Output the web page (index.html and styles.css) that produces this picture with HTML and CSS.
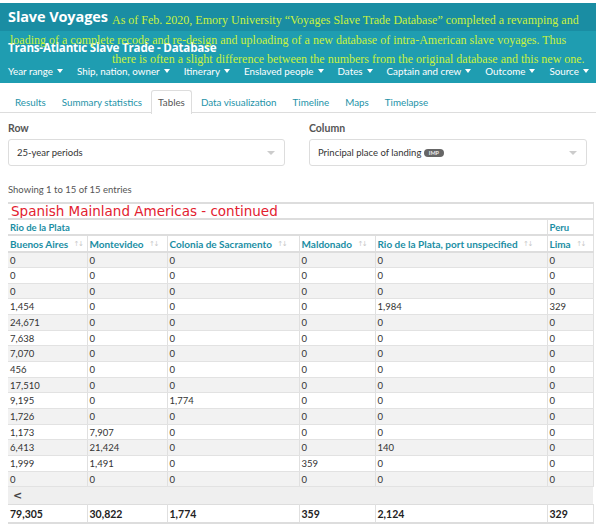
FILE: index.html
```html
<!DOCTYPE html>
<html>
<head>
<meta charset="utf-8">
<link rel="stylesheet" href="styles.css">
</head>
<body>
<header class="site-header">
  <div class="brand-bar"><span class="brand">Slave Voyages</span></div>
  <div class="sub-bar">
    <div class="db-title">Trans-Atlantic Slave Trade - Database</div>
    <nav class="menu">
      <span class="menu-item">Year range <i class="caret"></i></span>
      <span class="menu-item">Ship, nation, owner <i class="caret"></i></span>
      <span class="menu-item">Itinerary <i class="caret"></i></span>
      <span class="menu-item">Enslaved people <i class="caret"></i></span>
      <span class="menu-item">Dates <i class="caret"></i></span>
      <span class="menu-item">Captain and crew <i class="caret"></i></span>
      <span class="menu-item">Outcome <i class="caret"></i></span>
      <span class="menu-item">Source <i class="caret"></i></span>
    </nav>
  </div>
  <div class="notice">
    <div class="notice-l1">As of Feb. 2020, Emory University “Voyages Slave Trade Database” completed a revamping and</div>
    <div class="notice-l2">loading of a complete recode and re-design and uploading of a new database of intra-American slave voyages. Thus</div>
    <div class="notice-l3">there is often a slight difference between the numbers from the original database and this new one.</div>
  </div>
</header>

<main class="content">
  <ul class="tabs">
    <li class="tab">Results</li>
    <li class="tab">Summary statistics</li>
    <li class="tab active">Tables</li>
    <li class="tab">Data visualization</li>
    <li class="tab">Timeline</li>
    <li class="tab">Maps</li>
    <li class="tab">Timelapse</li>
  </ul>

  <div class="selectors">
    <div class="field">
      <div class="field-label">Row</div>
      <div class="select"><span>25-year periods</span><i class="sel-caret"></i></div>
    </div>
    <div class="field">
      <div class="field-label">Column</div>
      <div class="select"><span>Principal place of landing <span class="badge">IMP</span></span><i class="sel-caret"></i></div>
    </div>
  </div>

  <div class="info">Showing 1 to 15 of 15 entries</div>

  <table class="data">
    <colgroup>
      <col class="c1"><col class="c2"><col class="c3"><col class="c4"><col class="c5"><col class="c6">
    </colgroup>
    <thead>
      <tr class="caption-row"><th colspan="6" class="region">Spanish Mainland Americas - continued</th></tr>
      <tr class="group-row"><th colspan="5">Rio de la Plata</th><th>Peru</th></tr>
      <tr class="head-row">
        <th>Buenos Aires <span class="sort">↑↓</span></th>
        <th>Montevideo <span class="sort">↑↓</span></th>
        <th>Colonia de Sacramento <span class="sort">↑↓</span></th>
        <th>Maldonado <span class="sort">↑↓</span></th>
        <th>Rio de la Plata, port unspecified <span class="sort">↑↓</span></th>
        <th>Lima <span class="sort">↑↓</span></th>
      </tr>
    </thead>
    <tbody>
      <tr><td>0</td><td>0</td><td>0</td><td>0</td><td>0</td><td>0</td></tr>
      <tr><td>0</td><td>0</td><td>0</td><td>0</td><td>0</td><td>0</td></tr>
      <tr><td>0</td><td>0</td><td>0</td><td>0</td><td>0</td><td>0</td></tr>
      <tr><td>1,454</td><td>0</td><td>0</td><td>0</td><td>1,984</td><td>329</td></tr>
      <tr><td>24,671</td><td>0</td><td>0</td><td>0</td><td>0</td><td>0</td></tr>
      <tr><td>7,638</td><td>0</td><td>0</td><td>0</td><td>0</td><td>0</td></tr>
      <tr><td>7,070</td><td>0</td><td>0</td><td>0</td><td>0</td><td>0</td></tr>
      <tr><td>456</td><td>0</td><td>0</td><td>0</td><td>0</td><td>0</td></tr>
      <tr><td>17,510</td><td>0</td><td>0</td><td>0</td><td>0</td><td>0</td></tr>
      <tr><td>9,195</td><td>0</td><td>1,774</td><td>0</td><td>0</td><td>0</td></tr>
      <tr><td>1,726</td><td>0</td><td>0</td><td>0</td><td>0</td><td>0</td></tr>
      <tr><td>1,173</td><td>7,907</td><td>0</td><td>0</td><td>0</td><td>0</td></tr>
      <tr><td>6,413</td><td>21,424</td><td>0</td><td>0</td><td>140</td><td>0</td></tr>
      <tr><td>1,999</td><td>1,491</td><td>0</td><td>359</td><td>0</td><td>0</td></tr>
      <tr><td>0</td><td>0</td><td>0</td><td>0</td><td>0</td><td>0</td></tr>
    </tbody>
    <tfoot>
      <tr class="scroll-row"><td colspan="6"><span class="scroll-arrow">&lt;</span></td></tr>
      <tr class="total-row"><td>79,305</td><td>30,822</td><td>1,774</td><td>359</td><td>2,124</td><td>329</td></tr>
    </tfoot>
  </table>
</main>
</body>
</html>
```

FILE: styles.css
```css
* { box-sizing: border-box; }
body {
  margin: 0;
  background: #fff;
  font-family: Lato, "Open Sans", sans-serif;
  color: #333;
}
.site-header {
  position: relative;
  margin-top: 3px;
}
.brand-bar {
  background: #1a8da3;
  height: 28px;
  padding: 3px 8px 0;
}
.brand {
  color: #fff;
  font-weight: 700;
  font-size: 14.5px;
  font-family: "Open Sans", sans-serif;
  letter-spacing: -0.1px;
}
.sub-bar {
  background: #1f9db1;
  height: 52px;
  padding: 9px 8px 0;
}
.db-title {
  color: #fff;
  font-family: "Open Sans", sans-serif;
  font-weight: 700;
  font-size: 11.6px;
  line-height: 16px;
  letter-spacing: -0.2px;
}
.menu {
  display: flex;
  gap: 14px;
  margin-top: 9px;
  font-size: 9.8px;
  color: #fff;
  white-space: nowrap;
}
.menu-item { display: inline-flex; align-items: center; gap: 4px; }
.caret {
  display: inline-block;
  width: 0; height: 0;
  border-left: 3.5px solid transparent;
  border-right: 3.5px solid transparent;
  border-top: 4px solid #fff;
}
.notice {
  position: absolute;
  left: 0; top: 0; right: 0;
  font-family: "Liberation Serif", serif;
  font-size: 12px;
  color: #c9f23d;
  line-height: 20px;
  white-space: nowrap;
  pointer-events: none;
}
.notice-l1 { padding-left: 112px; margin-top: 7px; }
.notice-l2 { padding-left: 10px; margin-top: 0; }
.notice-l3 { padding-left: 112px; margin-top: -1px; }

.content { padding: 0 8px; }
.tabs {
  list-style: none;
  margin: 7px -8px 0;
  padding: 0 0 0 8px;
  display: flex;
  border-bottom: 1px solid #ddd;
  height: 23px;
}
.tab {
  font-size: 9.8px;
  color: #1e93a8;
  padding: 5px 6px 0;
  height: 23px;
  border: 1px solid transparent;
  border-bottom: none;
  border-radius: 3px 3px 0 0;
  margin-right: 2px;
}
.tab.active {
  color: #555;
  border-color: #ddd;
  background: #fff;
  height: 24px;
}

.selectors {
  display: grid;
  grid-template-columns: 277px 278px;
  column-gap: 24px;
  margin-top: 9px;
}
.field-label {
  font-size: 10.5px;
  font-weight: 700;
  color: #555;
  height: 17px;
}
.select {
  height: 27px;
  border: 1px solid #ddd;
  border-radius: 3px;
  display: flex;
  align-items: center;
  justify-content: space-between;
  padding: 0 9px 0 8px;
  font-size: 9.5px;
  color: #333;
}
.badge {
  display: inline-block;
  background: #666;
  color: #eee;
  font-size: 5.5px;
  font-weight: 700;
  padding: 1px 5px;
  border-radius: 5px;
  vertical-align: 1px;
}
.sel-caret {
  width: 0; height: 0;
  border-left: 4px solid transparent;
  border-right: 4px solid transparent;
  border-top: 4px solid #ccc;
}
.info {
  font-size: 9.5px;
  color: #555;
  margin-top: 18px;
  height: 16px;
}

.data {
  width: 585px;
  border-collapse: collapse;
  table-layout: fixed;
  margin-top: 2px;
  font-size: 9.5px;
}
.c1 { width: 79px; } .c2 { width: 80px; } .c3 { width: 132px; }
.c4 { width: 76px; } .c5 { width: 172px; } .c6 { width: 46px; }
.data th, .data td {
  text-align: left;
  padding: 0 2px;
  border-left: 1px solid #e0e0e0;
  border-right: 1px solid #e0e0e0;
  white-space: nowrap;
  overflow: hidden;
}
.data th:first-child, .data td:first-child { border-left: none; }
.caption-row th {
  border-top: 2px solid #ddd;
  border-bottom: 2px solid #ddd;
  height: 16px;
}
.region {
  font-family: "DejaVu Sans", sans-serif;
  font-weight: 400;
  font-size: 13.5px;
  color: #e3212f;
  padding-left: 3px !important;
  line-height: 14px;
}
.group-row th {
  height: 16px;
  color: #1a8ea4;
  font-weight: 700;
  border-bottom: 2px solid #ddd;
  padding-top: 1px;
}
.head-row th {
  height: 17px;
  color: #1a8ea4;
  font-weight: 700;
  font-size: 10px;
  border-bottom: 2px solid #ddd;
  padding-top: 1px;
}
.sort {
  font-family: "DejaVu Sans", sans-serif;
  color: #c8c8c8;
  font-weight: 400;
  font-size: 7px;
  letter-spacing: -1.5px;
  margin-left: 3px;
  vertical-align: 2px;
}
.data tbody td {
  height: 15.67px;
  border-bottom: 1px solid #e2e2e2;
  color: #333;
}
.data tbody tr:nth-child(odd) td { background: #f2f2f2; }
.scroll-row td {
  background: #efefef;
  height: 18px;
  border-right: none;
}
.scroll-arrow {
  font-family: "DejaVu Sans", sans-serif;
  font-size: 11px;
  font-weight: 700;
  color: #444;
  padding-left: 3px;
}
.total-row td {
  height: 18px;
  font-weight: 700;
  font-size: 10.5px;
  color: #222;
  border-top: 1px solid #ddd;
  border-bottom: 2px solid #ddd;
}
```
